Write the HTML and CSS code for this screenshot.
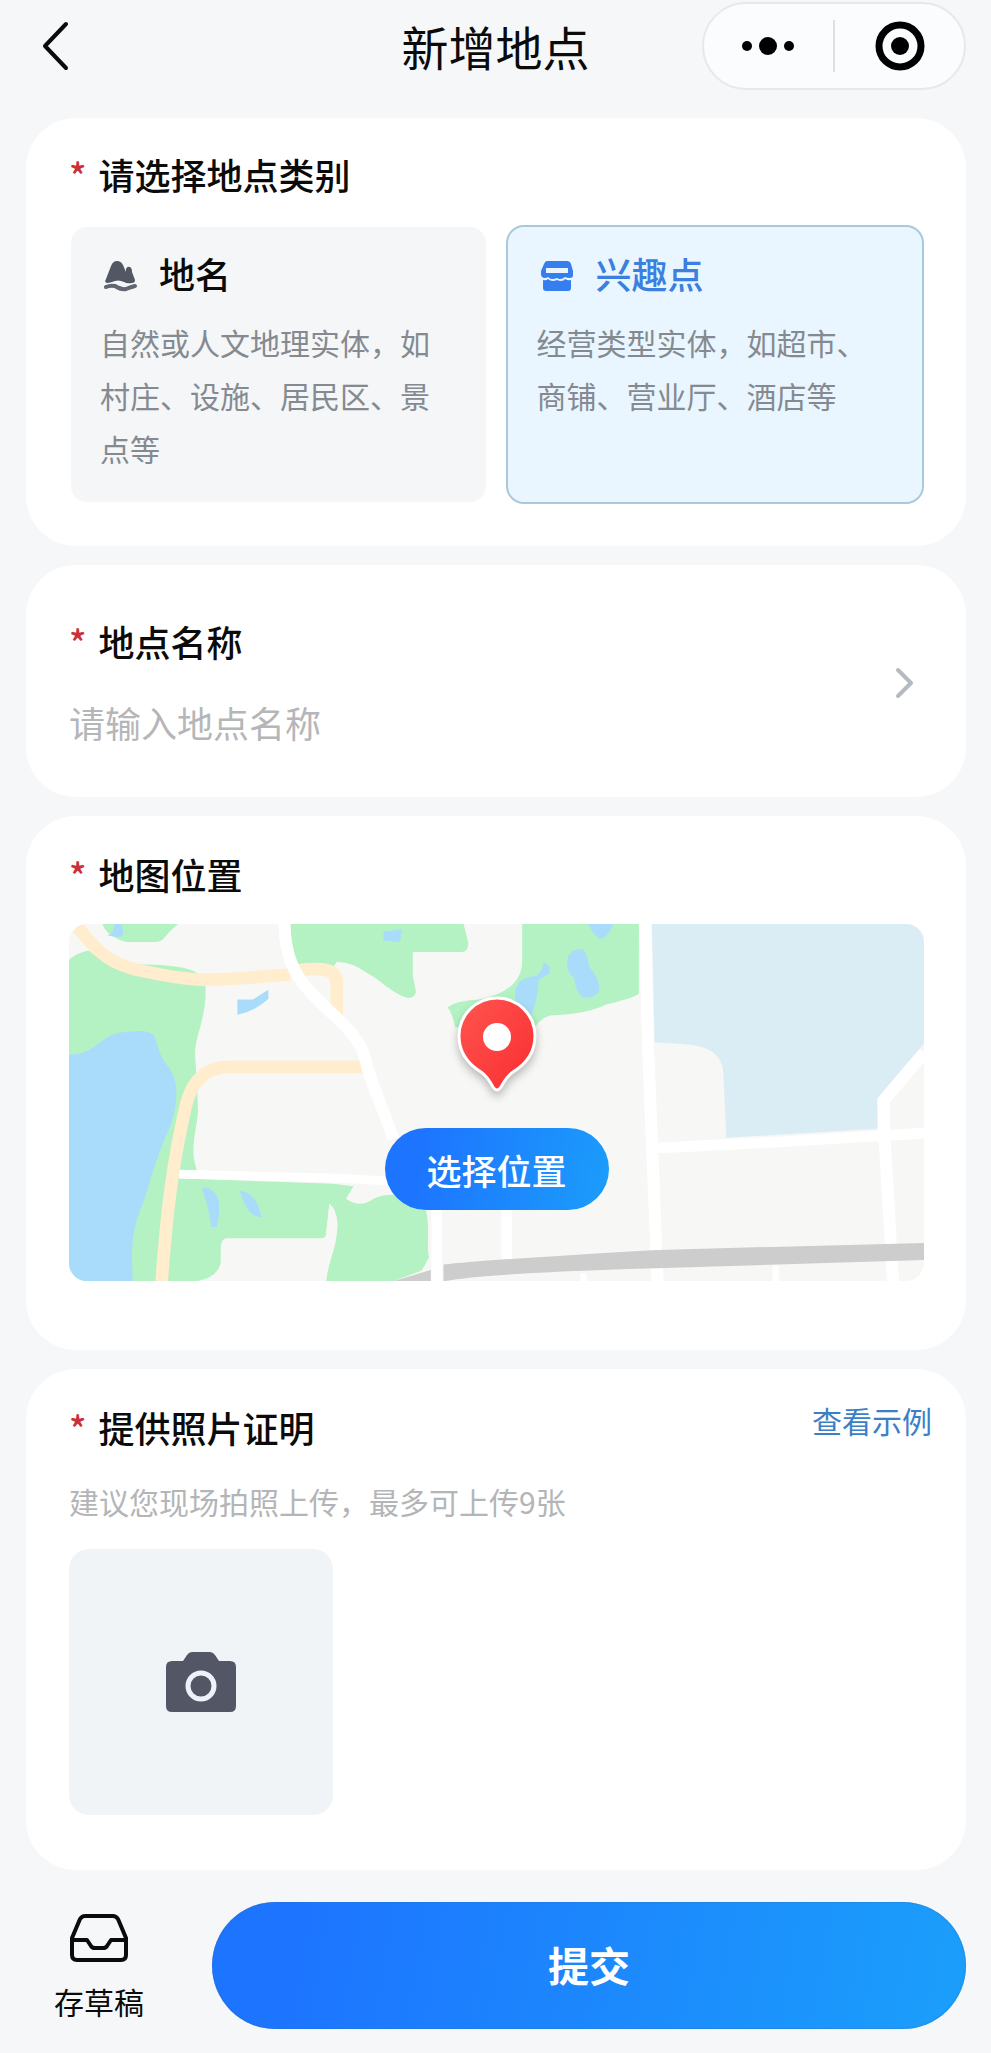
FILE: index.html
```html
<!DOCTYPE html>
<html lang="zh-CN">
<head>
    <meta charset="UTF-8">
    <meta name="viewport" content="width=device-width, initial-scale=1.0">
    <title>新增地点</title>
    <link rel="stylesheet" href="styles.css">
</head>
<body>
    <!-- Header -->
    <header class="header">
        <button class="icon-button back" type="button" aria-label="返回">
            <svg width="28" height="50" viewBox="0 0 28 50"><path d="M25 3 4 25l21 22" fill="none" stroke="#0b0b0b" stroke-width="4" stroke-linecap="round" stroke-linejoin="round"/></svg>
        </button>
        <h1>新增地点</h1>
        <div class="capsule">
            <button class="icon-button" type="button" aria-label="更多">
                <svg width="56" height="20" viewBox="0 0 56 20"><circle cx="6" cy="10" r="5"/><circle cx="27" cy="10" r="9"/><circle cx="48" cy="10" r="5"/></svg>
            </button>
            <span class="divider"></span>
            <button class="icon-button" type="button" aria-label="关闭">
                <svg width="50" height="50" viewBox="0 0 50 50"><circle cx="25" cy="25" r="21" fill="none" stroke="#000" stroke-width="7"/><circle cx="25" cy="25" r="9"/></svg>
            </button>
        </div>
    </header>

    <form id="place-form" class="cards">
        <!-- Place type -->
        <fieldset class="card type-card">
            <legend class="label"><span class="star">*</span>请选择地点类别</legend>
            <div class="options">
                <label class="option">
                    <input type="radio" name="type" value="place">
                    <span class="option-title">
                        <svg width="34" height="34" viewBox="0 0 34 34">
                            <path d="M3 20 8 7Q10 2 14 2Q18 2 20 6L23 13V10Q24 7 27 8Q29 9 29 13L32 21Q32 24 29 24Q24 25 21 23Q15 20 9 23Q6 24 4 24Q1 23 3 20Z" fill="#535763"/>
                            <path d="M3 28Q7 26 12 27Q18 31 23 30Q28 28 32 27" fill="none" stroke="#626672" stroke-width="4" stroke-linecap="round"/>
                        </svg>
                        地名
                    </span>
                    <span class="option-text">自然或人文地理实体，如村庄、设施、居民区、景点等</span>
                </label>
                <label class="option">
                    <input type="radio" name="type" value="poi" checked>
                    <span class="option-title">
                        <svg width="34" height="34" viewBox="0 0 34 34">
                            <path d="M7 2H27Q30 2 31 5L33 12V16Q33 19 30 19Q27 19 25 18Q23 20 20 20Q18 20 17 19Q15 20 12 20Q10 20 8 18Q7 19 4 19Q1 18 1 15V12L4 5Q5 2 7 2ZM6 9V14H28V9Z" fill="#347ef0" fill-rule="evenodd"/>
                            <path d="M3 21Q6 22 8 20Q10 22 13 22Q15 22 17 21Q19 22 21 22Q24 22 25 20Q28 22 31 21V29Q31 32 28 32H6Q3 32 3 29Z" fill="#347ef0"/>
                        </svg>
                        兴趣点
                    </span>
                    <span class="option-text">经营类型实体，如超市、商铺、营业厅、酒店等</span>
                </label>
            </div>
        </fieldset>

        <!-- Place name -->
        <section class="card name-card">
            <div class="name-field">
                <label class="label" for="place-name"><span class="star">*</span>地点名称</label>
                <input class="name-input" id="place-name" type="text" placeholder="请输入地点名称">
            </div>
            <svg width="22" height="34" viewBox="0 0 22 34"><path d="M4 4 17 17 4 30" fill="none" stroke="#b4babf" stroke-width="4" stroke-linecap="round" stroke-linejoin="round"/></svg>
        </section>

        <!-- Map position -->
        <section class="card map-card">
            <h2 class="label"><span class="star">*</span>地图位置</h2>
            <div class="map">
                <svg class="map-picture" viewBox="57 75 2564 1072" preserveAspectRatio="xMidYMid slice">
                    <rect x="57" y="75" width="2564" height="1072" fill="#f7f8f6"/>
                    <!-- parks -->
                    <g fill="#b4f2c4">
                        <path d="M57 183Q75 165 115 155L180 198Q390 190 440 222L466 262C472 350 435 410 435 465C438 520 442 560 444 640C435 720 420 750 440 812L390 838 850 855 910 862 888 900Q930 930 970 900Q1000 885 1040 888L1128 935C1140 990 1128 1040 1137 1075L1115 1115 1030 1147H828C835 1080 860 1050 862 975Q858 930 838 915L828 1005Q828 1018 810 1018H530Q512 1018 512 1050V1090Q505 1135 440 1147H57Z"/>
                        <path d="M157 75H385Q360 95 345 115Q335 130 315 130H230Q170 115 157 75Z"/>
                        <path d="M720 75H1240L1254 130Q1256 158 1235 160H1088V230L1098 280Q1090 302 1070 297C1020 280 1000 250 950 222Q900 188 860 190L850 205 745 200Q720 140 720 75Z"/>
                        <path d="M1416 75H1766V285Q1750 298 1666 318Q1614 345 1500 350Q1470 360 1459 380L1215 385Q1205 340 1192 325Q1220 305 1280 303Q1416 280 1416 185Z"/>
                    </g>
                    <path d="M828 1147C835 1080 860 1050 862 975Q858 930 838 915L828 1005V1147Z" fill="#f7f8f6"/>
                    <!-- water -->
                    <g fill="#a9dcfa">
                        <path d="M57 467C130 470 150 415 205 402C260 395 300 390 315 415Q330 480 360 510C390 560 380 620 362 680C320 770 300 850 280 910C240 1000 245 1060 248 1147H57Z"/>
                        <path d="M455 868Q490 860 506 905Q510 950 500 984H484Q475 920 455 868Z"/>
                        <path d="M568 876Q620 880 634 955Q600 955 580 908Z"/>
                        <path d="M562 302H608L655 273V300Q615 338 562 348Z"/>
                        <path d="M1000 98 1055 92 1050 130 1000 125Z"/>
                        <path d="M172 110Q190 108 193 76H213Q230 110 206 115Z"/>
                        <path d="M1395 275Q1405 235 1458 232Q1478 215 1480 190L1500 205 1497 225 1466 242Q1462 310 1442 350L1395 310Z"/>
                        <path d="M1552 180Q1560 148 1600 152Q1612 170 1618 205Q1655 250 1645 280Q1630 302 1598 295Q1575 280 1572 238Q1545 220 1552 180Z"/>
                        <path d="M1612 75H1690Q1670 120 1650 120Q1635 115 1612 75Z"/>
                    </g>
                    <path d="M1805 75H2621V435L2481 600V690L2028 717 2019 520Q2012 440 1900 436L1813 430Z" fill="#daedf5"/>
                    <!-- streets -->
                    <g fill="none" stroke="#fff">
                        <path d="M387 826 860 838 1010 846" stroke-width="26"/>
                        <path d="M1785 75 1793 430 1812 900 1822 1147" stroke-width="36"/>
                        <path d="M1815 748 2210 728 2621 703" stroke-width="32"/>
                        <path d="M2621 462 2500 605 2502 700 2528 1147" stroke-width="36"/>
                        <path d="M1160 930V1147M1370 930V1080" stroke-width="32"/>
                        <path d="M1600 1122V1147M2176 1100V1147" stroke-width="18"/>
                    </g>
                    <!-- main roads -->
                    <g fill="none" stroke="#ffedcd" stroke-width="38">
                        <path d="M82 84C150 170 190 200 280 217C460 255 470 245 720 227"/>
                        <path d="M740 215C820 205 858 210 860 250V355"/>
                        <path d="M335 1147C350 930 370 780 410 610Q440 504 540 504H950"/>
                    </g>
                    <path d="M703 75C705 180 735 235 800 300C860 360 930 410 945 480C960 550 985 590 1030 720" fill="none" stroke="#fff" stroke-width="36"/>
                    <path d="M1180 1097Q1300 1083 1821 1053L2621 1032V1083L1821 1108Q1320 1122 1180 1147ZM1030 1147 1142 1113V1147Z" fill="#cdcdcd"/>
                </svg>
                <div class="map-overlay">
                    <svg class="pin" width="84" height="102" viewBox="0 0 84 102">
                        <defs>
                            <linearGradient id="pin-fill" x1="0" y1="0" x2="1" y2="1"><stop offset="0" stop-color="#ff5550"/><stop offset="1" stop-color="#f92d30"/></linearGradient>
                        </defs>
                        <path d="M42 4A38 38 0 0 1 80 42C80 58 71 70 58 78Q52 82 46 93Q42 99 38 93Q32 82 26 78C13 70 4 58 4 42A38 38 0 0 1 42 4Z" fill="url(#pin-fill)" stroke="#fff" stroke-width="3"/>
                        <circle cx="42" cy="43" r="14" fill="#fff"/>
                    </svg>
                    <button class="map-button" type="button">选择位置</button>
                </div>
            </div>
        </section>

        <!-- Photos -->
        <section class="card photo-card">
            <div class="photo-head">
                <h2 class="label"><span class="star">*</span>提供照片证明</h2>
                <a href="#example">查看示例</a>
            </div>
            <p class="hint">建议您现场拍照上传，最多可上传9张</p>
            <button class="upload" type="button" aria-label="上传照片">
                <svg width="72" height="62" viewBox="0 0 72 62">
                    <path d="M27 1H45Q48 1 50 4L54 10H65Q71 10 71 16V55Q71 61 65 61H7Q1 61 1 55V16Q1 10 7 10H18L22 4Q24 1 27 1Z" fill="#535765"/>
                    <circle cx="36" cy="35" r="13" fill="none" stroke="#edf1fa" stroke-width="5"/>
                </svg>
            </button>
        </section>
    </form>

    <!-- Bottom actions -->
    <footer class="footer">
        <button class="draft" type="button">
            <svg width="60" height="50" viewBox="0 0 60 50"><path d="M16 3H44Q47 3 49 6L57 25V42Q57 47 52 47H8Q3 47 3 42V25L11 6Q13 3 16 3ZM3 27H18L22 33Q23 35 26 35H34Q37 35 38 33L42 27H57" fill="none" stroke="#0b0b0b" stroke-width="4" stroke-linejoin="round"/></svg>
            存草稿
        </button>
        <button class="submit" type="submit" form="place-form">提交</button>
    </footer>
</body>
</html>
```
FILE: styles.css
```css
* {
    box-sizing: border-box;
}
body {
    margin: 0;
    background-color: #f5f7f9;
    color: #0b0b0b;
    font-family: "Noto Sans CJK SC", sans-serif;
    font-size: 30px;
}
button, input {
    font-family: inherit;
    color: inherit;
}
button {
    border: none;
    padding: 0;
    cursor: pointer;
}
svg {
    display: block;
    flex-shrink: 0;
}

/* Header */
.header {
    display: grid;
    grid-template-columns: 1fr auto 1fr;
    align-items: center;
    padding: 2px 25px 28px;
}
.header h1 {
    margin: 0;
    font-size: 47px;
    line-height: 64px;
    font-weight: 400;
}
.icon-button {
    display: flex;
    align-items: center;
    justify-content: center;
    background: none;
}
.back {
    justify-self: start;
    padding-left: 16px;
}
.capsule {
    justify-self: end;
    display: grid;
    grid-template-columns: 1fr 2px 1fr;
    align-items: center;
    width: 264px;
    height: 88px;
    border: 2px solid #e7e8eb;
    border-radius: 44px;
    background-color: #fbfcfe;
}
.divider {
    height: 52px;
    background-color: #dedfe1;
}

/* Cards */
.cards {
    display: flex;
    flex-direction: column;
    gap: 19px;
    padding: 0 25px 0 26px;
}
.card {
    min-width: 0;
    margin: 0;
    padding: 34px 42px 34px 43px;
    border: none;
    border-radius: 50px;
    background-color: #fff;
}
.label {
    display: flex;
    gap: 12px;
    margin: 0;
    padding: 0;
    font-size: 36px;
    line-height: 48px;
    font-weight: 500;
}
.star {
    color: #cb3038;
}

.type-card {
    padding-top: 32px;
    padding-bottom: 42px;
}
.type-card legend {
    float: left;
}
.options {
    clear: both;
    display: grid;
    grid-template-columns: 1fr 1fr;
    gap: 18px;
    padding-top: 27px;
}
.option {
    padding: 22px 40px 27px 29px;
    border: 2px solid transparent;
    border-radius: 18px;
    background-color: #f4f6f8;
    background-clip: padding-box;
    cursor: pointer;
}
.option input {
    position: absolute;
    opacity: 0;
}
.option:has(input:checked) {
    border-color: #a9c9da;
    background-color: #e9f6ff;
}
.option-title {
    display: flex;
    align-items: center;
    gap: 22px;
    margin-bottom: 19px;
    padding-left: 3px;
    font-size: 36px;
    line-height: 48px;
    font-weight: 500;
}
.option-title svg {
    margin-top: 6px;
}
.option:has(input:checked) .option-title {
    color: #3b7fe0;
}
.option-text {
    display: block;
    color: #858a90;
    line-height: 53px;
}

.name-card {
    display: flex;
    align-items: center;
    justify-content: space-between;
    padding-top: 52px;
    padding-right: 50px;
    padding-bottom: 48px;
}
.name-field {
    flex: 1;
}
.name-input {
    display: block;
    width: 100%;
    height: 54px;
    margin-top: 30px;
    padding: 0;
    border: none;
    outline: none;
    background: none;
    font-size: 36px;
}
.name-input::placeholder {
    color: #b5b6b8;
}

/* Map */
.map-card {
    padding-bottom: 69px;
}
.map {
    display: grid;
    margin-top: 26px;
    border-radius: 18px;
    overflow: hidden;
}
.map-picture, .map-overlay {
    grid-area: 1 / 1;
}
.map-picture {
    width: 100%;
    height: 357px;
}
.map-overlay {
    display: flex;
    flex-direction: column;
    align-items: center;
    gap: 32px;
    padding-top: 70px;
}
.pin {
    filter: drop-shadow(0 5px 4px rgba(0, 0, 0, 0.25));
}
.map-button {
    width: 224px;
    height: 82px;
    border-radius: 41px;
    background: linear-gradient(100deg, #1d74ff 15%, #1b9dfb);
    color: #fff;
    font-size: 35px;
    font-weight: 500;
}

/* Photos */
.photo-card {
    padding-bottom: 55px;
}
.photo-head {
    display: flex;
    justify-content: space-between;
    align-items: flex-start;
    margin-right: -8px;
}
.photo-head a {
    color: #3b80c6;
    line-height: 34px;
    text-decoration: none;
}
.hint {
    margin: 27px 0 25px;
    color: #b3b5b7;
    line-height: 46px;
}
.upload {
    display: flex;
    align-items: center;
    justify-content: center;
    width: 264px;
    height: 266px;
    border-radius: 20px;
    background-color: #f1f4f6;
}

/* Bottom actions */
.footer {
    display: flex;
    align-items: center;
    gap: 68px;
    padding: 32px 25px 23px 54px;
}
.draft {
    display: flex;
    flex-direction: column;
    align-items: center;
    gap: 16px;
    padding-top: 4px;
    background: none;
    font-size: 30px;
    line-height: 44px;
}
.submit {
    flex: 1;
    height: 127px;
    padding-bottom: 4px;
    border-radius: 64px;
    background: linear-gradient(100deg, #1d74ff 10%, #1b9ffb);
    box-shadow: inset 0 0 2px #2f6fb5;
    color: #fff;
    font-size: 41px;
    font-weight: 700;
}
```
